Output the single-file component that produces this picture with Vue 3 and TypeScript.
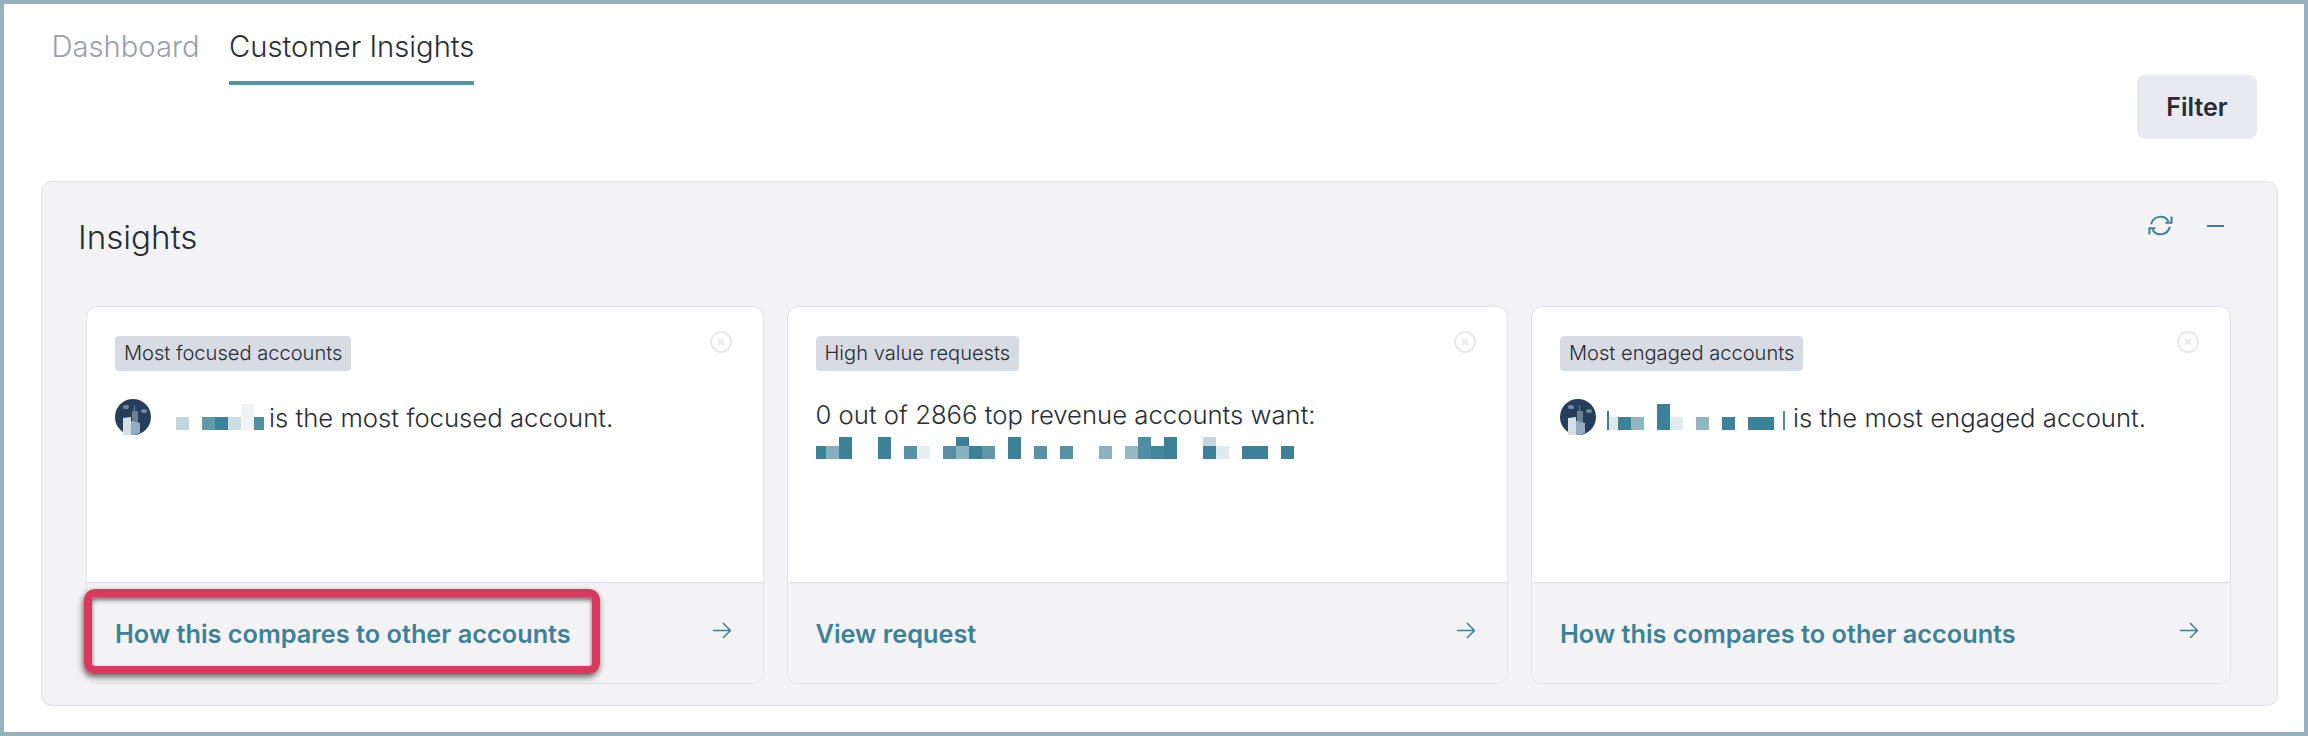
<script setup lang="ts">
interface Cell { w: number; h: number; c: string; top?: string }
const T = 'transparent'
const D = '#3c8197'

const focused: Cell[] = [
  { w: 13, h: 13, c: '#c0d6dc' }, { w: 13, h: 13, c: T },
  { w: 13, h: 13, c: '#5e9aaa' }, { w: 13, h: 13, c: '#3e8299' },
  { w: 13, h: 13, c: '#cddfe3' }, { w: 13, h: 26, c: '#eef3f6' },
  { w: 10, h: 13, c: '#4c8ea2' }
]
const engaged: Cell[] = [
  { w: 2, h: 19, c: D }, { w: 9, h: 13, c: '#dde9ed' },
  { w: 13, h: 13, c: D }, { w: 13, h: 13, c: '#8fb5c0' }, { w: 13, h: 13, c: T },
  { w: 13, h: 26, c: D }, { w: 13, h: 13, c: '#e2ecef' }, { w: 13, h: 13, c: T },
  { w: 13, h: 13, c: '#8fb5c0' }, { w: 13, h: 13, c: T },
  { w: 13, h: 13, c: D }, { w: 13, h: 13, c: T },
  { w: 26, h: 13, c: D }, { w: 9, h: 13, c: T }, { w: 2, h: 19, c: '#4a8ea3' }
]
const requested: Cell[] = [
  { w: 10, h: 13, c: '#3e8299' }, { w: 13, h: 13, c: '#84aebb' }, { w: 13, h: 22, c: D },
  { w: 26, h: 13, c: T }, { w: 13, h: 22, c: D }, { w: 13, h: 13, c: T },
  { w: 13, h: 13, c: '#5593a5' }, { w: 13, h: 13, c: '#e6eff1' }, { w: 13, h: 13, c: T },
  { w: 13, h: 13, c: '#5590a4' }, { w: 13, h: 22, c: '#88b2c0', top: D },
  { w: 13, h: 13, c: D }, { w: 13, h: 13, c: '#5e97a7' }, { w: 13, h: 13, c: T },
  { w: 13, h: 22, c: D }, { w: 13, h: 13, c: T },
  { w: 13, h: 13, c: '#5593a5' }, { w: 13, h: 13, c: T },
  { w: 13, h: 13, c: '#5690a5' }, { w: 26, h: 13, c: T },
  { w: 13, h: 13, c: '#8cb2c0' }, { w: 13, h: 13, c: T },
  { w: 13, h: 13, c: '#93b8c3' }, { w: 13, h: 22, c: '#4e8da1' },
  { w: 13, h: 13, c: '#43869b' }, { w: 13, h: 22, c: D }, { w: 26, h: 13, c: T },
  { w: 13, h: 22, c: D, top: '#c3d6de' }, { w: 13, h: 13, c: '#dfeaec' }, { w: 13, h: 13, c: T },
  { w: 26, h: 13, c: D }, { w: 13, h: 13, c: T }, { w: 13, h: 13, c: D }
]

function cellStyle(cell: Cell) {
  return {
    width: cell.w + 'px',
    height: cell.h + 'px',
    background: cell.top
      ? `linear-gradient(${cell.top} 0 9px, ${cell.c} 9px)`
      : cell.c
  }
}
</script>

<template>
  <div class="frame">
    <header class="top">
      <nav class="tabs">
        <a class="tab">Dashboard</a>
        <a class="tab active">Customer Insights</a>
      </nav>
      <button class="filter" type="button">Filter</button>
    </header>

    <section class="panel">
      <div class="panel-head">
        <h2 class="panel-title">Insights</h2>
        <div class="panel-actions">
          <svg class="refresh" viewBox="0 0 25 21" fill="none" stroke="currentColor" stroke-width="2">
            <path d="M3.2 9.2A9.4 9.4 0 0 1 20.6 6.6" />
            <path d="M21.8 11.8A9.4 9.4 0 0 1 4.4 14.4" />
            <path d="M23.6 1.6v6.2h-6.2" />
            <path d="M1.4 19.4v-6.2h6.2" />
          </svg>
          <svg class="minus" viewBox="0 0 17 2" fill="none" stroke="currentColor" stroke-width="2">
            <path d="M0 1h17" />
          </svg>
        </div>
      </div>

      <div class="cards">
        <article class="card">
          <div class="card-body">
            <div class="card-top">
              <span class="tag">Most focused accounts</span>
              <svg class="close" viewBox="0 0 22 22" fill="none" stroke="currentColor" stroke-width="2">
                <circle cx="11" cy="11" r="10" />
                <path d="M8 8l6 6M14 8l-6 6" />
              </svg>
            </div>
            <div class="line">
              <svg class="avatar" viewBox="0 0 36 36">
                <circle cx="18" cy="18" r="18" fill="#253f5b" />
                <ellipse cx="11" cy="8" rx="3" ry="2" fill="#75879b" />
                <ellipse cx="29" cy="12" rx="3" ry="2" fill="#75879b" />
                <path d="M17 36V12h2V6h1v6h3v24z" fill="#6c7f95" />
                <path d="M8 36V19l8-1v18z" fill="#d5dde6" />
                <path d="M16 36V22l9 2v10q-4 2-9 2z" fill="#96abc6" />
              </svg>
              <span class="redact first">
                <i v-for="(cell, i) in focused" :key="i" :style="cellStyle(cell)"></i>
              </span>
              <span class="sentence">is the most focused account.</span>
            </div>
          </div>
          <a class="card-foot">
            <span>How this compares to other accounts</span>
            <svg class="arrow" viewBox="0 0 18 17" fill="none" stroke="currentColor" stroke-width="1.5">
              <path d="M0 8.5h17M10 1l7.5 7.5L10 16" />
            </svg>
            <span class="mark"></span>
          </a>
        </article>

        <article class="card">
          <div class="card-body">
            <div class="card-top">
              <span class="tag">High value requests</span>
              <svg class="close" viewBox="0 0 22 22" fill="none" stroke="currentColor" stroke-width="2">
                <circle cx="11" cy="11" r="10" />
                <path d="M8 8l6 6M14 8l-6 6" />
              </svg>
            </div>
            <p class="request">0 out of 2866 top revenue accounts want:</p>
            <span class="redact">
              <i v-for="(cell, i) in requested" :key="i" :style="cellStyle(cell)"></i>
            </span>
          </div>
          <a class="card-foot">
            <span>View request</span>
            <svg class="arrow" viewBox="0 0 18 17" fill="none" stroke="currentColor" stroke-width="1.5">
              <path d="M0 8.5h17M10 1l7.5 7.5L10 16" />
            </svg>
          </a>
        </article>

        <article class="card">
          <div class="card-body">
            <div class="card-top">
              <span class="tag">Most engaged accounts</span>
              <svg class="close" viewBox="0 0 22 22" fill="none" stroke="currentColor" stroke-width="2">
                <circle cx="11" cy="11" r="10" />
                <path d="M8 8l6 6M14 8l-6 6" />
              </svg>
            </div>
            <div class="line">
              <svg class="avatar" viewBox="0 0 36 36">
                <circle cx="18" cy="18" r="18" fill="#253f5b" />
                <ellipse cx="11" cy="8" rx="3" ry="2" fill="#75879b" />
                <ellipse cx="29" cy="12" rx="3" ry="2" fill="#75879b" />
                <path d="M17 36V12h2V6h1v6h3v24z" fill="#6c7f95" />
                <path d="M8 36V19l8-1v18z" fill="#d5dde6" />
                <path d="M16 36V22l9 2v10q-4 2-9 2z" fill="#96abc6" />
              </svg>
              <span class="redact second">
                <i v-for="(cell, i) in engaged" :key="i" :style="cellStyle(cell)"></i>
              </span>
              <span class="sentence">is the most engaged account.</span>
            </div>
          </div>
          <a class="card-foot">
            <span>How this compares to other accounts</span>
            <svg class="arrow" viewBox="0 0 18 17" fill="none" stroke="currentColor" stroke-width="1.5">
              <path d="M0 8.5h17M10 1l7.5 7.5L10 16" />
            </svg>
          </a>
        </article>
      </div>
    </section>
  </div>
</template>

<style>
html, body { margin: 0; background: #fff; }
</style>

<style scoped>
.frame {
  box-sizing: border-box;
  width: 2308px;
  height: 736px;
  border: 4px solid #97b0be;
  background: #fff;
  font-family: Inter, "Liberation Sans", sans-serif;
  color: #2a2d34;
  display: flex;
  flex-direction: column;
}
.top {
  height: 177px;
  display: flex;
  justify-content: space-between;
  align-items: flex-start;
  padding: 0 47px 0 47.5px;
}
.tabs { display: flex; gap: 29.5px; padding-top: 25px; }
.tab {
  height: 52px;
  line-height: 36px;
  font-size: 29.2px;
  font-weight: 350;
  color: #9b9ea8;
}
.tab.active {
  color: #2a2d34;
  border-bottom: 4px solid #4d98a5;
}
.filter {
  margin-top: 71px;
  width: 120px;
  height: 64px;
  border: 0;
  border-radius: 8px;
  background: #e9eaef;
  font: 600 25px Inter, sans-serif;
  color: #2a2d34;
}
.panel {
  box-sizing: border-box;
  width: 2237px;
  height: 525px;
  margin-left: 37px;
  background: #f3f3f6;
  border: 1px solid #dfe0e5;
  border-radius: 11px;
  padding: 0 46px 0 44px;
  display: flex;
  flex-direction: column;
}
.panel-head {
  height: 124px;
  display: flex;
  justify-content: space-between;
  align-items: flex-start;
}
.panel-title {
  margin: 35px 0 0 -8px;
  font-size: 33.2px;
  line-height: 40px;
  font-weight: 350;
  color: #2a2d34;
}
.panel-actions {
  display: flex;
  align-items: center;
  gap: 34px;
  margin-top: 33px;
  padding-right: 7px;
  color: #3e8299;
}
.refresh { width: 25px; height: 21px; display: block; }
.minus { width: 17px; height: 2px; display: block; }
.cards {
  display: grid;
  grid-template-columns: 677.5px 721.5px 700px;
  column-gap: 23px;
}
.card {
  box-sizing: border-box;
  height: 378px;
  background: #fff;
  border: 1px solid #e0e1e8;
  border-radius: 11px;
  display: flex;
  flex-direction: column;
}
.card-body {
  flex: 1;
  padding: 29px 28px 0 28px;
  border-radius: 11px 11px 0 0;
}
.card-top {
  display: flex;
  justify-content: space-between;
  align-items: flex-start;
  height: 63px;
}
.tag {
  height: 35px;
  line-height: 35px;
  padding: 0 9px;
  border-radius: 4px;
  background: #d8dbe3;
  font-size: 20.1px;
  font-weight: 350;
  color: #2a2d34;
}
.close {
  width: 22px;
  height: 22px;
  margin: -5px 3px 0 0;
  color: #e8e9f0;
}
.line {
  display: flex;
  align-items: flex-start;
  height: 36px;
}
.avatar { width: 36px; height: 36px; flex: none; display: block; }
.redact { display: flex; align-items: flex-end; height: 26px; }
.redact i { display: block; flex: none; }
.first { margin: 5px 5px 0 25px; }
.second { margin: 5px 8px 0 11px; }
.sentence {
  font-size: 25.7px;
  line-height: 32px;
  font-weight: 350;
  margin-top: 3px;
}
.request {
  margin: 0 0 2px;
  font-size: 25.7px;
  line-height: 32px;
  font-weight: 350;
}
.card-foot {
  position: relative;
  box-sizing: border-box;
  height: 101px;
  flex: none;
  background: #f3f3f6;
  border-top: 1px solid #e0e1e8;
  border-radius: 0 0 11px 11px;
  padding: 0 32px 0 28px;
  display: flex;
  justify-content: space-between;
  align-items: center;
  font-size: 25.3px;
  font-weight: 600;
  color: #3e8299;
}
.arrow { width: 18px; height: 17px; display: block; margin-top: -5px; }
.mark {
  position: absolute;
  left: -3px;
  top: 6px;
  width: 516px;
  height: 85px;
  box-sizing: border-box;
  border: 8px solid #d83a5e;
  border-radius: 11px;
  box-shadow: -1px 3px 6px rgba(0, 0, 0, 0.6), inset 0 3px 4px rgba(0, 0, 0, 0.55);
}
</style>
